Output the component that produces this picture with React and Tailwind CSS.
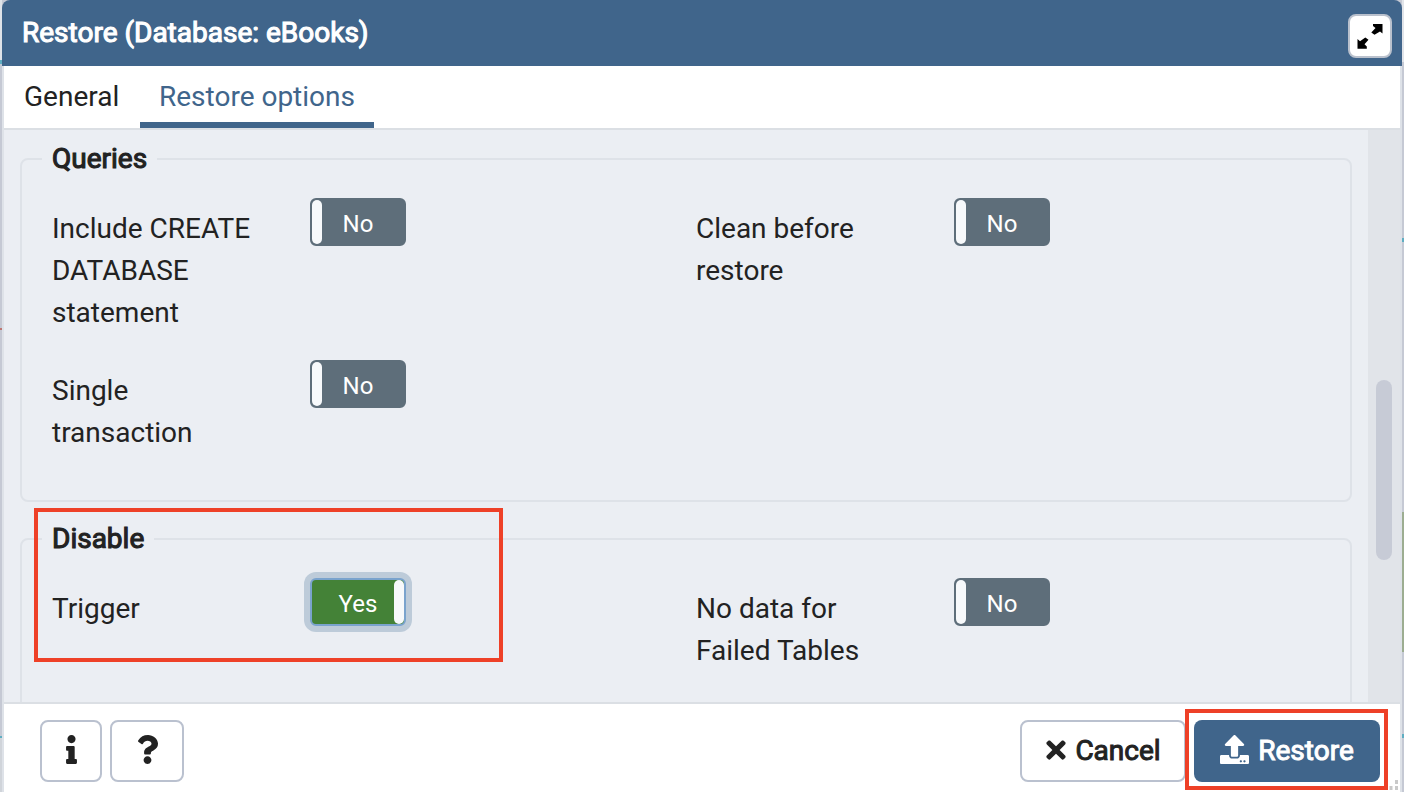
import React from 'react';
import { FaInfo, FaQuestion, FaTimes, FaUpload } from 'react-icons/fa';

function Toggle({ on = false }) {
  if (on) {
    return (
      <div className="flex h-12 w-24 shrink-0 items-center rounded-md border-2 border-[#7aa3cd] bg-[#448237] text-2xl text-white ring-6 ring-[#bdcbd9]">
        <span className="flex-1 pl-2.5 pt-1 text-center">Yes</span>
        <span className="h-full w-2.5 rounded-md bg-[#f7f9fb]" />
      </div>
    );
  }
  return (
    <div className="flex h-12 w-24 shrink-0 items-center rounded-md border-2 border-[#5e6e7a] bg-[#5e6e7a] text-2xl text-white">
      <span className="h-full w-2.5 rounded-md bg-[#f7f9fb]" />
      <span className="flex-1 pr-2.5 pt-1 text-center">No</span>
    </div>
  );
}

function Option({ label, on }) {
  return (
    <div className="flex h-[162px] w-[644px] items-start pl-2.5">
      <div className="mt-2.5 w-[258px] pr-11">{label}</div>
      <Toggle on={on} />
    </div>
  );
}

function Group({ title, className, children }) {
  return (
    <fieldset className={'w-[1332px] shrink-0 rounded-lg border-2 border-[#dee2e8] px-5 ' + className}>
      <legend className="px-2.5 [-webkit-text-stroke:1.1px_#222]">{title}</legend>
      <div className="flex w-[1288px] flex-wrap pt-[18px]">{children}</div>
    </fieldset>
  );
}

export default function App() {
  return (
    <div className="relative flex h-[792px] w-[1404px] overflow-hidden bg-[#c5c9d4] font-['Roboto',sans-serif] text-[28px] leading-[42px] text-[#222]">
      <div className="flex w-0.5 flex-col">
        <div className="h-[60px] bg-[#dfe3e8]" />
        <div className="h-1 bg-[#5faec2]" />
        <div className="h-[264px]" />
        <div className="h-0.5 bg-[#bd7772]" />
        <div className="h-[406px]" />
        <div className="h-0.5 bg-[#5faec2]" />
        <div className="flex-1 bg-[#d0d4da]" />
      </div>

      <div className="flex w-[1400px] flex-col">
        <header className="flex h-[66px] shrink-0 items-start justify-between rounded-t-lg bg-[#40658b] pl-5 pr-2.5 text-white">
          <h1 className="pt-3 [-webkit-text-stroke:1.1px_white]">Restore (Database: eBooks)</h1>
          <button className="mt-3.5 flex h-11 w-11 items-center justify-center rounded-lg border-2 border-[#bac1cd] bg-white">
            <svg viewBox="0 0 26 26" className="h-[26px] w-[26px]" fill="black">
              <path d="M16 1H25.5V10.5L23 8.5L17.5 11.8L14.3 9.5L18.5 5L16 3Z" />
              <path d="M.5 16L3 18.3L8.3 14.5L11.5 16.8L7.5 21.3L9.8 23.5V25.7H.5Z" />
            </svg>
          </button>
        </header>

        <div className="flex min-h-0 flex-1 flex-col border-x-2 border-[#dee2e8] bg-white">
          <nav className="flex h-16 shrink-0 border-b-2 border-[#dbdfe4]">
            <div className="w-[136px] pl-5 pt-2.5">General</div>
            <div className="w-[234px] border-b-6 border-[#40658b] pt-2.5 text-center text-[#40658b]">Restore options</div>
          </nav>

          <main className="flex min-h-0 flex-1 overflow-hidden bg-[#ebeef3]">
            <div className="flex w-[1364px] flex-col overflow-hidden pl-4 pt-2">
              <Group title="Queries" className="h-[364px]">
                <Option label="Include CREATE DATABASE statement" />
                <Option label="Clean before restore" />
                <Option label="Single transaction" />
              </Group>
              <Group title="Disable" className="mt-4 h-[300px]">
                <Option label="Trigger" on />
                <Option label="No data for Failed Tables" />
              </Group>
            </div>
            <div className="w-8 bg-[#e1e4e9] pl-2 pt-[250px]">
              <div className="h-[180px] w-4 rounded-full bg-[#c7cbd6]" />
            </div>
          </main>

          <footer className="flex h-[90px] shrink-0 items-start border-t-2 border-[#dbdfe4] pl-9 pr-5 pt-4">
            <button className="flex h-[62px] w-[62px] items-center justify-center rounded-lg border-2 border-[#bac1cf] pb-[3px]">
              <FaInfo size={29} />
            </button>
            <button className="ml-2 flex h-[62px] w-[74px] items-center justify-center rounded-lg border-2 border-[#bac1cf] pb-[3px]">
              <FaQuestion size={29} />
            </button>
            <button className="ml-auto flex h-[62px] w-[166px] items-center justify-center gap-[5px] rounded-lg border-2 border-[#bac1cf] pr-[3px]">
              <FaTimes size={28} className="mb-[3px]" />
              <span className="[-webkit-text-stroke:1px_#222]">Cancel</span>
            </button>
            <button className="ml-2 flex h-[62px] w-[186px] items-center justify-center gap-[9px] rounded-lg bg-[#40658b] text-white">
              <FaUpload size={29} className="mb-[3px]" />
              <span className="[-webkit-text-stroke:1px_white]">Restore</span>
            </button>
          </footer>
        </div>
      </div>

      <div className="flex w-0.5 flex-col">
        <div className="h-[62px] bg-[#e1e4e9]" />
        <div className="h-[176px]" />
        <div className="h-1 bg-[#5faec2]" />
        <div className="h-[270px]" />
        <div className="h-[140px] bg-[#9cad91]" />
        <div className="h-[82px]" />
        <div className="h-1 bg-[#5faec2]" />
      </div>

      <div className="absolute left-[34px] top-[508px] h-[154px] w-[469px] border-4 border-[#ee4027]" />
      <div className="absolute left-[1185px] top-[709px] h-[81px] w-[203px] border-4 border-[#ee4027]" />
      <svg className="absolute left-[1388px] top-[778px] h-3.5 w-3" viewBox="0 0 12 14" fill="#c9c9c9">
        <path d="M7 2h3v4H7zM7 8h3v4H7zM1.5 8h3v4h-3z" />
      </svg>
    </div>
  );
}
